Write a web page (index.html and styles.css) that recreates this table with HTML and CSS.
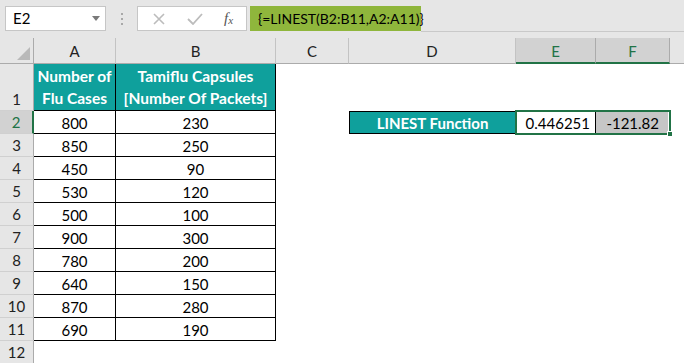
FILE: index.html
```html
<!DOCTYPE html>
<html>
<head>
<meta charset="utf-8">
<link rel="stylesheet" href="styles.css">
</head>
<body>
<div class="app">
  <div class="fbar">
    <div class="namebox">
      <span class="nb-text">E2</span>
      <svg class="nb-arrow" width="8" height="5" viewBox="0 0 8 5"><path d="M0 0H8L4 5Z" fill="#7a7a7a"/></svg>
    </div>
    <div class="dots"><i></i><i></i><i></i></div>
    <div class="fbtns">
      <svg class="btn-x" width="12" height="12" viewBox="0 0 12 12"><path d="M1 1L11 11M11 1L1 11" stroke="#bcbcbc" stroke-width="1.6" fill="none"/></svg>
      <svg class="btn-ok" width="16" height="12" viewBox="0 0 16 12"><path d="M1 6L6 11L15 1" stroke="#bcbcbc" stroke-width="1.8" fill="none"/></svg>
      <span class="btn-fx">f<sub>x</sub></span>
    </div>
    <div class="formula">{=LINEST(B2:B11,A2:A11)}</div>
    <div class="frest"></div>
  </div>
  <div class="sheet">
    <div class="corner"><span class="tri"></span></div>
    <div class="ch">A</div>
    <div class="ch">B</div>
    <div class="ch">C</div>
    <div class="ch">D</div>
    <div class="ch sel">E</div>
    <div class="ch sel">F</div>
    <div class="ch last"></div>

    <div class="rh tall">1</div>
    <div class="c th">Number of<br>Flu Cases</div>
    <div class="c th">Tamiflu Capsules<br>[Number Of Packets]</div>
    <div class="e span"></div>

    <div class="rh sel">2</div>
    <div class="c">800</div><div class="c">230</div>
    <div class="e"></div>
    <div class="label">LINEST Function</div>
    <div class="selbox">
      <div class="val ve">0.446251</div>
      <div class="val vf">-121.82</div>
      <span class="handle"></span>
    </div>
    <div class="e"></div>

    <div class="rh">3</div><div class="c">850</div><div class="c">250</div><div class="e span"></div>
    <div class="rh">4</div><div class="c">450</div><div class="c">90</div><div class="e span"></div>
    <div class="rh">5</div><div class="c">530</div><div class="c">120</div><div class="e span"></div>
    <div class="rh">6</div><div class="c">500</div><div class="c">100</div><div class="e span"></div>
    <div class="rh">7</div><div class="c">900</div><div class="c">300</div><div class="e span"></div>
    <div class="rh">8</div><div class="c">780</div><div class="c">200</div><div class="e span"></div>
    <div class="rh">9</div><div class="c">640</div><div class="c">150</div><div class="e span"></div>
    <div class="rh">10</div><div class="c">870</div><div class="c">280</div><div class="e span"></div>
    <div class="rh">11</div><div class="c">690</div><div class="c">190</div><div class="e span"></div>
    <div class="rh">12</div><div class="e span2"></div>
  </div>
</div>
</body>
</html>
```

FILE: styles.css
```css
* { box-sizing: border-box; }
html, body { margin: 0; padding: 0; }
body {
  width: 684px;
  height: 363px;
  overflow: hidden;
  background: #ffffff;
  font-family: "Lato", "Noto Sans", sans-serif;
  font-size: 15px;
  color: #000;
}
.app { width: 684px; height: 363px; overflow: hidden; }

/* formula bar */
.fbar {
  height: 38px;
  background: #e6e6e6;
  display: flex;
  align-items: flex-start;
  padding-top: 6px;
  padding-left: 5px;
}
.namebox {
  width: 101px;
  height: 25px;
  background: #fff;
  border: 1px solid #c6c6c6;
  display: flex;
  align-items: center;
  justify-content: space-between;
  padding: 0 5px 0 7px;
}
.nb-text { font-size: 15px; line-height: 1; }
.dots {
  width: 31px;
  height: 25px;
  display: flex;
  flex-direction: column;
  align-items: center;
  justify-content: center;
  gap: 3px;
}
.dots i { display: block; width: 2px; height: 2px; background: #a8a8a8; }
.fbtns {
  width: 110px;
  height: 25px;
  background: #fff;
  border: 1px solid #c6c6c6;
  display: flex;
  align-items: center;
  padding-left: 15px;
}
.btn-x { margin-right: 22px; }
.btn-ok { margin-right: 21px; }
.btn-fx {
  font-family: "Liberation Serif", "DejaVu Serif", serif;
  font-style: italic;
  font-size: 15px;
  color: #555;
  line-height: 1;
}
.btn-fx sub { font-size: 11px; vertical-align: -1px; }
.formula {
  margin-left: 3px;
  width: 171px;
  height: 25px;
  background: #8fb63c;
  display: flex;
  align-items: center;
  padding-left: 8px;
  font-size: 14px;
  white-space: nowrap;
}
.frest {
  flex: 1;
  height: 26px;
  border-bottom: 1px solid #c9c9c9;
}

/* sheet */
.sheet {
  display: grid;
  grid-template-columns: 34px 82px 160px 73px 167px 80px 74px 1fr;
  grid-template-rows: 26px 47px repeat(11, 23px) 23px;
}
.corner {
  background: #e6e6e6;
  border-right: 1px solid #ababab;
  border-bottom: 1px solid #ababab;
  position: relative;
}
.tri {
  position: absolute;
  right: 3px;
  bottom: 3px;
  width: 0; height: 0;
  border-left: 13px solid transparent;
  border-bottom: 13px solid #b9b9b9;
}
.ch {
  background: #e6e6e6;
  border-bottom: 1px solid #ababab;
  border-right: 1px solid #c3c3c3;
  display: flex;
  align-items: center;
  justify-content: center;
  font-size: 15px;
  color: #222;
  padding-top: 1px;
}
.ch.sel {
  background: #d2d2d2;
  color: #217346;
  border-bottom: 2px solid #217346;
  border-right-color: #ababab;
}
.ch.last { border-right: none; }
.rh {
  background: #e6e6e6;
  border-right: 1px solid #ababab;
  border-bottom: 1px solid #d0d0d0;
  display: flex;
  align-items: center;
  justify-content: center;
  color: #222;
  font-size: 15px;
}
.rh.tall { align-items: flex-end; padding-bottom: 2px; }
.rh.sel {
  background: #d2d2d2;
  color: #217346;
  border-right: 2px solid #217346;
}
.c {
  border-right: 1px solid #000;
  border-bottom: 1px solid #000;
  display: flex;
  align-items: center;
  justify-content: center;
  line-height: 22px;
  padding-top: 1px;
}
.c.th {
  background: #0fa09c;
  color: #fff;
  font-weight: bold;
  font-size: 15.5px;
  text-align: center;
  align-items: flex-end;
  padding-bottom: 1px;
  white-space: nowrap;
}
.e { background: #fff; }
.e.span { grid-column: 4 / 9; }
.e.span2 { grid-column: 2 / 9; }
.label {
  background: #0fa09c;
  color: #fff;
  font-weight: bold;
  border: 1px solid #000;
  display: flex;
  align-items: center;
  justify-content: center;
  padding-top: 1px;
}
.selbox {
  grid-column: 6 / 8;
  display: grid;
  grid-template-columns: 80px 74px;
  outline: 2px solid #217346;
  outline-offset: -1px;
  position: relative;
}
.val {
  display: flex;
  align-items: center;
  justify-content: flex-end;
  padding-right: 5px;
  padding-top: 1px;
  white-space: nowrap;
}
.ve { border-right: 1px solid #000; }
.vf { background: #c6c6c6; padding-right: 9px; margin: 1px 2px 1px 0; }
.handle {
  position: absolute;
  right: -3px;
  bottom: -3px;
  width: 6px;
  height: 6px;
  background: #217346;
  border: 1px solid #fff;
}
```
